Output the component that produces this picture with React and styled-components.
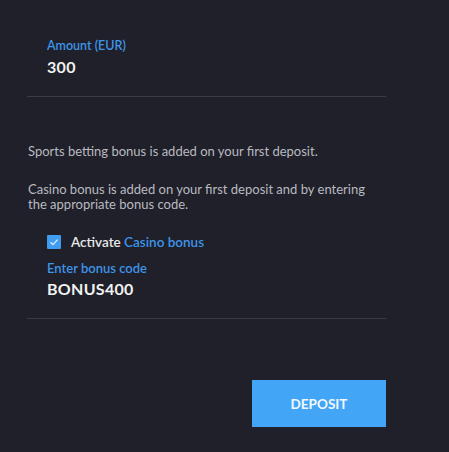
import styled, { createGlobalStyle } from 'styled-components';

const GlobalStyle = createGlobalStyle`
  html, body {
    margin: 0;
    padding: 0;
    background: #1f2029;
  }
  body {
    font-family: Lato, "Open Sans", sans-serif;
  }
`;

const Page = styled.div`
  width: 449px;
  height: 452px;
  background: #1f2029;
  padding: 0 0 0 27px;
  box-sizing: border-box;
  display: flex;
  flex-direction: column;
`;

const Column = styled.div`
  width: 359px;
  display: flex;
  flex-direction: column;
`;

const Field = styled.div`
  padding: ${(p) => p.$top}px 20px 0;
  display: flex;
  flex-direction: column;
  border-bottom: 1px solid #3b3c46;
  height: ${(p) => p.$height}px;
  box-sizing: border-box;
`;

const Label = styled.div`
  color: #3d94e8;
  font-size: ${(p) => p.$size || 12.5}px;
  line-height: 14px;
  font-weight: 600;
  margin-top: ${(p) => p.$gap || 0}px;
`;

const Value = styled.div`
  color: #f2f2f2;
  font-size: 16px;
  line-height: 20px;
  font-weight: 700;
  margin-top: 4px;
  letter-spacing: 0.3px;
`;

const Note = styled.p`
  margin: ${(p) => p.$top}px 0 0 1px;
  color: #b9bac0;
  font-size: 13px;
  line-height: 15px;
  max-width: 345px;
`;

const CheckRow = styled.label`
  display: flex;
  align-items: center;
  gap: 10px;
  color: #e8e8e8;
  font-size: 13.5px;
  font-weight: 600;
  line-height: 14px;
`;

const Box = styled.span`
  width: 14px;
  height: 14px;
  background: #3f9cf0;
  border-radius: 1px;
  display: flex;
  align-items: center;
  justify-content: center;
`;

const Accent = styled.span`
  color: #3d94e8;
`;

const Actions = styled.div`
  display: flex;
  justify-content: flex-end;
  margin-top: 61px;
`;

const Button = styled.button`
  width: 134px;
  height: 47px;
  border: none;
  background: #42a5f5;
  color: #f4f9ff;
  font-family: Lato, "Open Sans", sans-serif;
  font-size: 13.5px;
  font-weight: 700;
  cursor: pointer;
`;

export default function App() {
  return (
    <>
      <GlobalStyle />
      <Page>
        <Column>
          <Field $top={39} $height={97}>
            <Label>Amount (EUR)</Label>
            <Value>300</Value>
          </Field>
          <Note $top={47}>Sports betting bonus is added on your first deposit.</Note>
          <Note $top={23}>
            Casino bonus is added on your first deposit and by entering the appropriate bonus code.
          </Note>
          <Field $top={23} $height={107}>
            <CheckRow>
              <Box>
                <svg width="10" height="10" viewBox="0 0 10 10">
                  <path d="M1.5 5.2 L4 7.6 L8.6 2.6" stroke="#d8ecff" strokeWidth="1.4" fill="none" />
                </svg>
              </Box>
              <span>
                Activate <Accent>Casino bonus</Accent>
              </span>
            </CheckRow>
            <Label $gap={12} $size={13}>Enter bonus code</Label>
            <Value>BONUS400</Value>
          </Field>
          <Actions>
            <Button>DEPOSIT</Button>
          </Actions>
        </Column>
      </Page>
    </>
  );
}
